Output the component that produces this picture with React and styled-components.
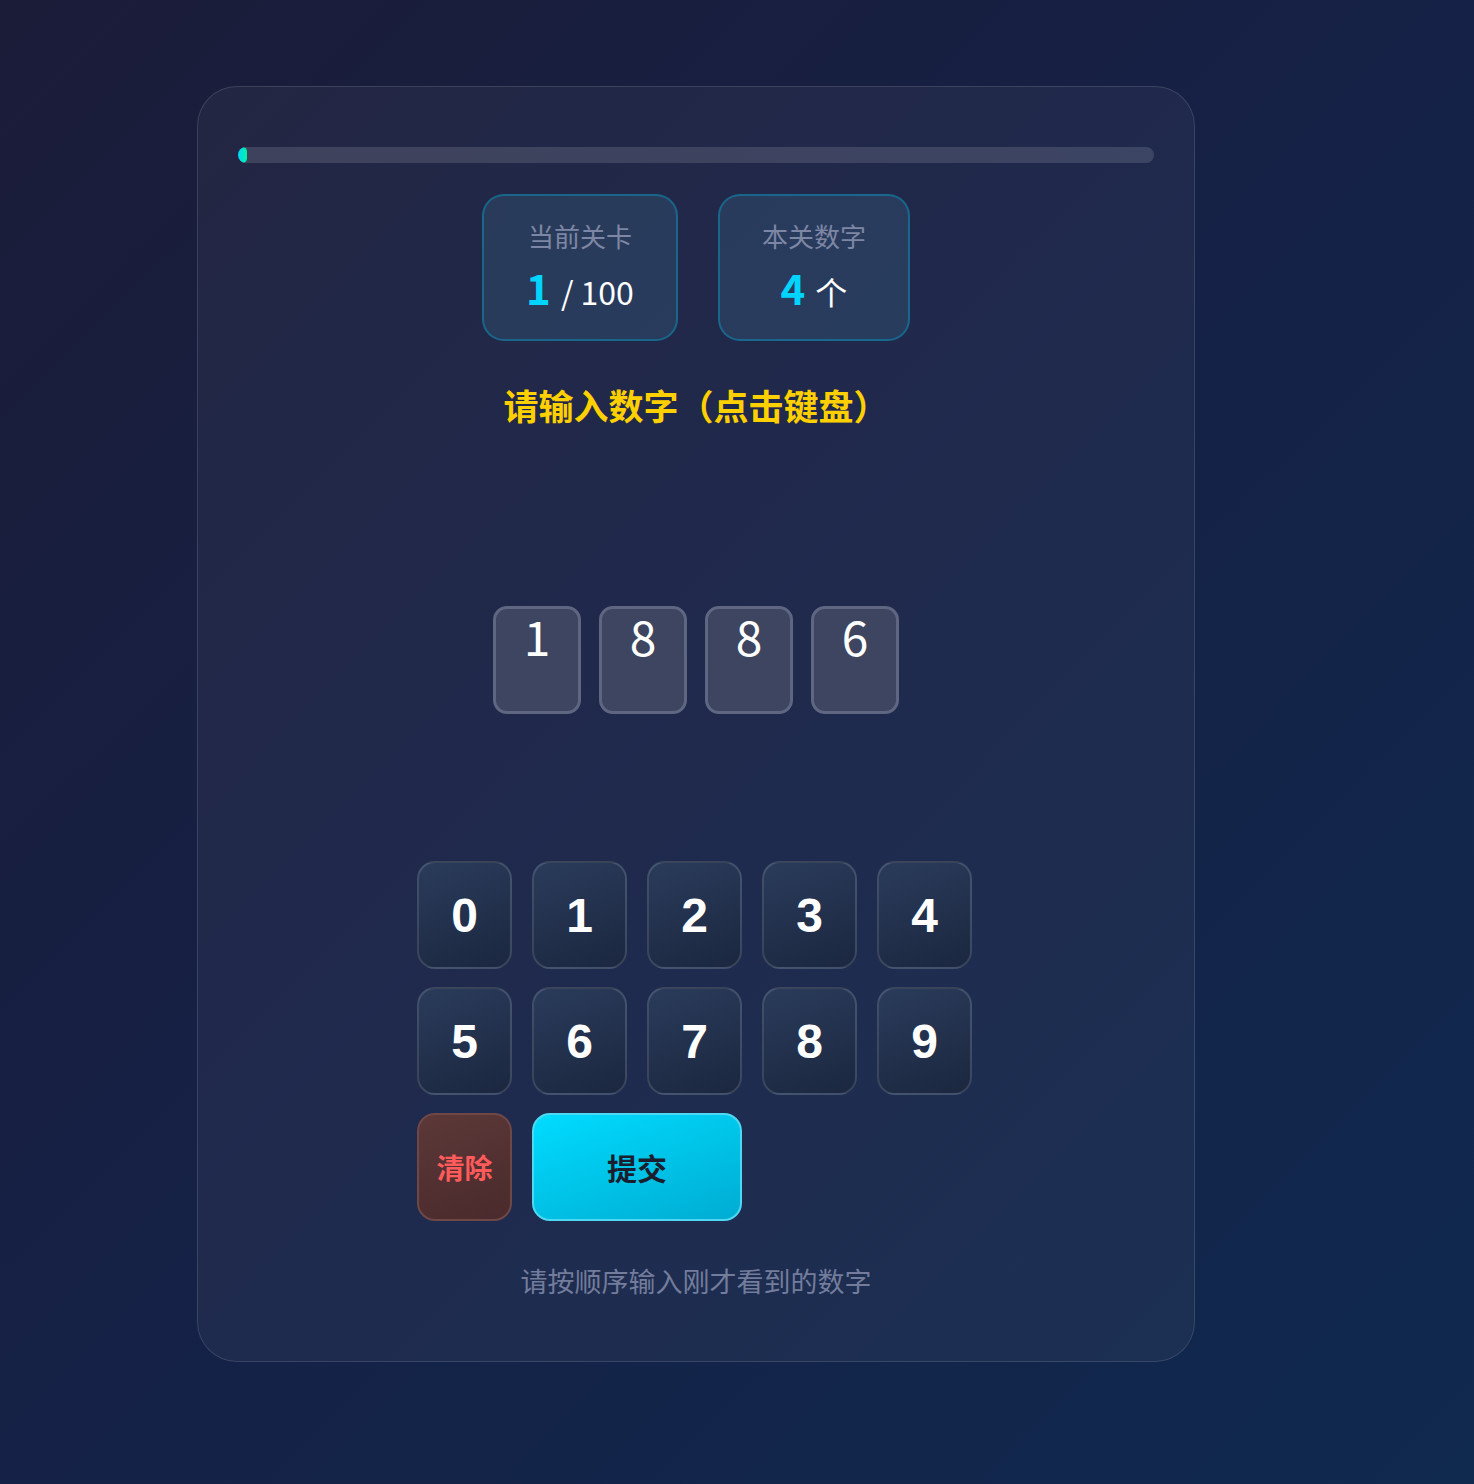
import styled, { createGlobalStyle } from 'styled-components';

const GlobalStyle = createGlobalStyle`
  html, body {
    margin: 0;
    padding: 0;
  }
  body {
    min-height: 1484px;
    background: linear-gradient(135deg, #1b1c38 0%, #152146 50%, #10294f 100%);
    font-family: "Noto Sans CJK SC", "Noto Sans", sans-serif;
    color: #fff;
  }
`;

const Page = styled.div`
  display: flex;
  padding: 86px 0 0 197px;
`;

const GameCard = styled.div`
  width: 998px;
  box-sizing: border-box;
  padding: 60px 40px 60px;
  border: 1px solid rgba(255, 255, 255, 0.12);
  border-radius: 40px;
  background: rgba(255, 255, 255, 0.045);
  display: flex;
  flex-direction: column;
  align-items: center;
`;

const ProgressTrack = styled.div`
  width: 100%;
  height: 16px;
  border-radius: 8px;
  background: rgba(255, 255, 255, 0.13);
  overflow: hidden;
`;

const ProgressFill = styled.div`
  height: 100%;
  border-radius: 8px;
  background: linear-gradient(90deg, #00d4ff, #00f5a0);
`;

const StatsRow = styled.div`
  display: flex;
  gap: 40px;
  margin-top: 31px;
`;

const StatBox = styled.div`
  box-sizing: border-box;
  height: 147px;
  padding: 23px 42px 0;
  border: 2px solid rgba(0, 175, 215, 0.38);
  border-radius: 22px;
  background: rgba(100, 200, 230, 0.12);
  display: flex;
  flex-direction: column;
  align-items: center;
`;

const StatLabel = styled.div`
  font-size: 26px;
  line-height: 34px;
  color: #7d86a4;
`;

const StatValue = styled.div`
  margin-top: 12px;
  display: flex;
  align-items: baseline;
  gap: 10px;
  font-size: 32px;
  line-height: 44px;
  color: #fff;
  white-space: nowrap;
`;

const StatNumber = styled.span`
  font-size: 42px;
  font-weight: 700;
  color: #00d4ff;
`;

const Prompt = styled.div`
  margin-top: 39px;
  font-size: 35px;
  line-height: 50px;
  font-weight: 700;
  color: #ffd000;
`;

const DigitRow = styled.div`
  display: flex;
  gap: 18px;
  margin-top: 176px;
`;

const DigitSlot = styled.div`
  box-sizing: border-box;
  width: 88px;
  height: 108px;
  border: 3px solid #5e6681;
  border-radius: 14px;
  background: #3e4560;
  display: flex;
  justify-content: center;
  font-size: 48px;
  line-height: 1.1;
  color: #fff;
`;

const Keypad = styled.div`
  display: grid;
  grid-template-columns: repeat(5, 95px);
  grid-auto-rows: 108px;
  column-gap: 20px;
  row-gap: 18px;
  margin: 147px 3px 0 0;
`;

const Key = styled.button`
  box-sizing: border-box;
  grid-column: span ${props => props.$span || 1};
  border-radius: 18px;
  border: 2px solid ${props => props.$variant === 'clear' ? '#6e4747' : props.$variant === 'submit' ? '#4fd8f2' : 'rgba(255, 255, 255, 0.13)'};
  background: ${props => props.$variant === 'clear'
    ? 'linear-gradient(160deg, #5c3838, #4a2a2c)'
    : props.$variant === 'submit'
      ? 'linear-gradient(160deg, #00dcff, #00acd2)'
      : 'linear-gradient(160deg, #2a3b5b, #1b273f)'};
  color: ${props => props.$variant === 'clear' ? '#ff5b5b' : props.$variant === 'submit' ? '#1a1e2e' : '#fff'};
  font-family: ${props => props.$variant ? '"Noto Sans CJK SC", sans-serif' : '"Liberation Sans", Arial, sans-serif'};
  font-size: ${props => props.$variant === 'clear' ? '28px' : props.$variant === 'submit' ? '30px' : '48px'};
  font-weight: 700;
  display: flex;
  align-items: center;
  justify-content: center;
  padding: 0;
  cursor: pointer;
`;

const Hint = styled.div`
  margin-top: 40px;
  font-size: 27px;
  line-height: 40px;
  color: #737c9b;
`;

const entered = ['1', '8', '8', '6'];
const keys = ['0', '1', '2', '3', '4', '5', '6', '7', '8', '9'];

export default function App() {
  const level = 1;
  const total = 100;

  return (
    <>
      <GlobalStyle />
      <Page>
        <GameCard>
          <ProgressTrack>
            <ProgressFill style={{ width: `${(level / total) * 100}%` }} />
          </ProgressTrack>

          <StatsRow>
            <StatBox>
              <StatLabel>当前关卡</StatLabel>
              <StatValue>
                <StatNumber>{level}</StatNumber>
                <span>/ {total}</span>
              </StatValue>
            </StatBox>
            <StatBox>
              <StatLabel>本关数字</StatLabel>
              <StatValue>
                <StatNumber>{entered.length}</StatNumber>
                <span>个</span>
              </StatValue>
            </StatBox>
          </StatsRow>

          <Prompt>请输入数字（点击键盘）</Prompt>

          <DigitRow>
            {entered.map((d, i) => (
              <DigitSlot key={i}>{d}</DigitSlot>
            ))}
          </DigitRow>

          <Keypad>
            {keys.map(k => (
              <Key key={k}>{k}</Key>
            ))}
            <Key $variant="clear">清除</Key>
            <Key $variant="submit" $span={2}>提交</Key>
          </Keypad>

          <Hint>请按顺序输入刚才看到的数字</Hint>
        </GameCard>
      </Page>
    </>
  );
}
